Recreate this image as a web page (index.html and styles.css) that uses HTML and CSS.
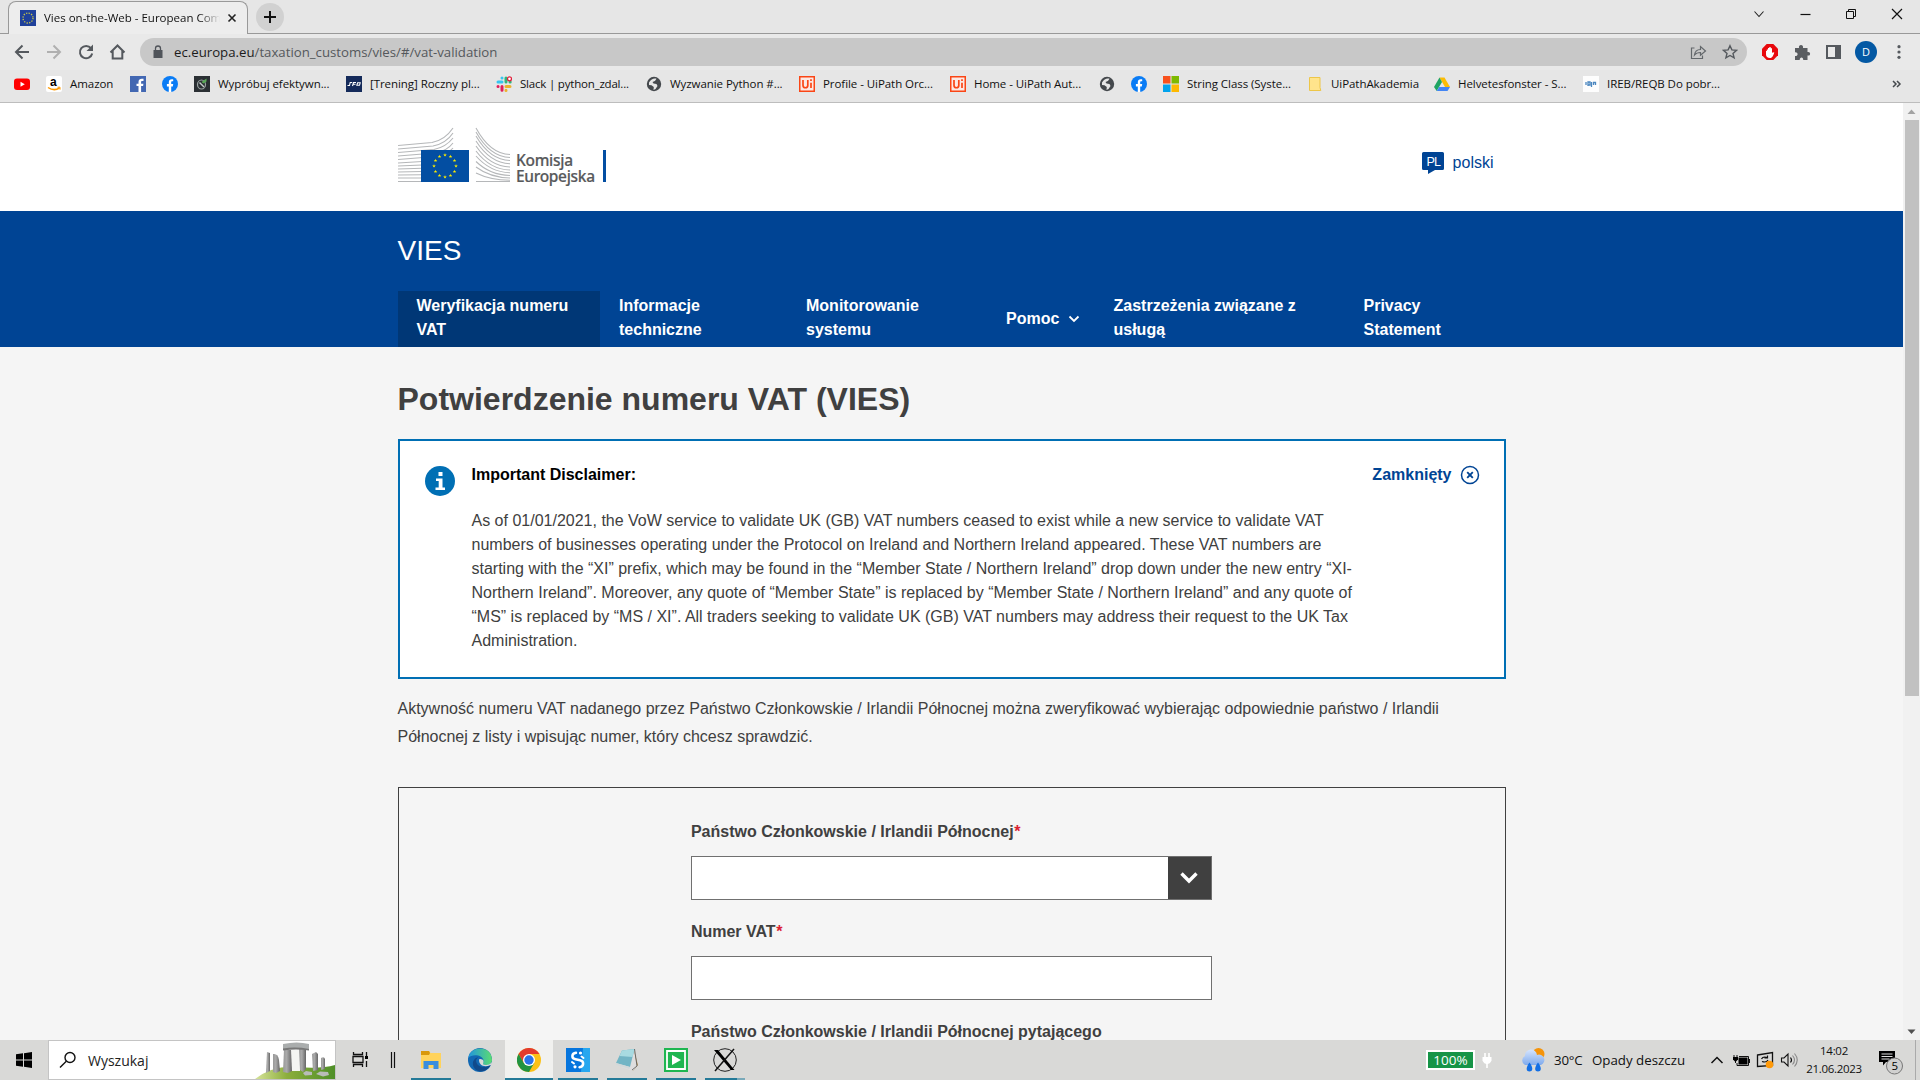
FILE: index.html
```html
<!DOCTYPE html>
<html lang="pl">
<head>
<meta charset="utf-8">
<title>Vies on-the-Web - European Commission</title>
<link rel="stylesheet" href="styles.css">
</head>
<body>
<svg width="0" height="0" class="defs">
  <defs>
    <symbol id="fb" viewBox="0 0 16 16"><circle cx="8" cy="8" r="8" fill="#0a7cf5"/><path d="M6.800 16V10.400H4.900V8h1.900V6.400c0-2 1.100-3.100 2.900-3.100.8 0 1.500.1 1.500.1v1.900h-.9c-.9 0-1.100.6-1.100 1.100V8h2l-.4 2.400H9.200V16z" fill="#fff"/></symbol>
    <symbol id="globe" viewBox="0 0 16 16"><circle cx="8" cy="8" r="7.200" fill="#45494d"/><path d="M3 6.500C5 3 8 2 10.500 2.800L9 5 6.500 6l1 1.500 3 .5 1 2-2 3-2 1 .3-3L5.500 9.300 3 9z" fill="#e6e6e6"/><path d="M8.500 5.500 12 3.500 14 7l-2 1-2.500-1z" fill="#45494d"/></symbol>
    <symbol id="uipath" viewBox="0 0 16 16"><path d="M0 0h16v16H0z" fill="#fa4616"/><path d="M1.500 1.500h13v13h-13z" fill="#fce9e4"/><path d="M4 4v5.200c0 3.400 4.800 3.400 4.800 0V4M12 6.700V12M12 3.300v1.800" fill="none" stroke="#fa4616" stroke-width="1.700"/></symbol>
    <symbol id="star" viewBox="-1 -1 2 2"><path d="M0-1 .225-.31H.95L.363.118.588.809 0 .382-.588.809-.363.118-.95-.31H-.225z" fill="#ffed00"/></symbol>
  </defs>
</svg>

<header class="browser">
  <div class="tabs">
    <div class="tab">
      <svg class="i16" viewBox="0 0 16 16"><path d="M0 0h16v16H0z" fill="#1f419b"/><circle cx="8" cy="8" r="5" fill="none" stroke="#c9c648" stroke-width="1.300" stroke-dasharray="1.300 1.318"/></svg>
      <span class="tab-title">Vies on-the-Web - European Com</span>
      <svg class="tab-close" viewBox="0 0 10 10"><path d="M1.500 1.500l7 7M8.500 1.500l-7 7" stroke="#222" stroke-width="1.600"/></svg>
    </div>
    <div class="newtab"><svg width="14" height="14"><path d="M7 1v12M1 7h12" stroke="#111" stroke-width="2"/></svg></div>
    <div class="winbtns">
      <svg width="48" height="16"><path d="M20.500 5.500 25 10.500 29.500 5.500" fill="none" stroke="#222" stroke-width="1.100"/></svg>
      <svg width="46" height="16"><path d="M18.500 8.500h10" stroke="#111" stroke-width="1.200"/></svg>
      <svg width="46" height="16"><path d="M18.500 5.500h7v7h-7zM20.500 5.500v-2h7v7h-2" fill="none" stroke="#111"/></svg>
      <svg width="46" height="16"><path d="M18 3l10 10M28 3 18 13" stroke="#111" stroke-width="1.200"/></svg>
    </div>
  </div>

  <div class="toolbar">
    <svg class="nav-ico" viewBox="0 0 32 20"><path d="M29 10H16M22.500 3.500 16 10l6.500 6.500" fill="none" stroke="#55595e" stroke-width="2"/></svg>
    <svg class="nav-ico" viewBox="0 0 32 20"><path d="M15 10h13M21.500 3.500 28 10l-6.500 6.500" fill="none" stroke="#b0b0b0" stroke-width="2"/></svg>
    <svg class="nav-ico" viewBox="0 0 32 20"><path d="M27 6.200A6.200 6.200 0 1 0 28.200 11.500" fill="none" stroke="#55595e" stroke-width="2"/><path d="M29 2.500V9h-6.500z" fill="#55595e"/></svg>
    <svg class="nav-ico" viewBox="0 0 32 20"><path d="M14.500 10.500 21.500 3.500l7 7M16.700 9v7.500h9.600V9" fill="none" stroke="#55595e" stroke-width="2"/></svg>
    <div class="omnibox">
      <svg width="12" height="14" viewBox="0 0 12 14"><path d="M1.500 5h9v8h-9z" fill="#50545a"/><path d="M3.500 6V3.500a2.500 2.500 0 0 1 5 0V6" fill="none" stroke="#50545a" stroke-width="1.300"/></svg>
      <span class="url"><b>ec.europa.eu</b>/taxation_customs/vies/#/vat-validation</span>
      <svg class="share" width="17" height="16" viewBox="0 0 17 16"><path d="M4.500 4H1.500v10.500h11v-3M4.500 11c.5-4 2.500-5.500 6-5.500V2.500l5 4.500-5 4.200V8.500c-3 0-4.600.7-6 2.500z" fill="none" stroke="#63676b" stroke-width="1.200"/></svg>
      <svg width="16" height="16" viewBox="0 0 16 16"><path d="M8 1.700l1.900 4.200 4.600.4L11 9.400l1.100 4.500L8 11.500l-4.100 2.400L5 9.400 1.500 6.300l4.600-.4z" fill="none" stroke="#55595e" stroke-width="1.400"/></svg>
    </div>
    <div class="ext">
      <svg width="32" height="24" viewBox="0 0 32 24"><path d="M12.700 4h6.600L24 8.700v6.600L19.300 20h-6.600L8 15.300V8.700z" fill="#e8090d"/><path d="M12 11v3.500c0 2 1.500 3.500 4 3.500 2 0 3-1.500 4.300-5.500l-1.600-.2-.7 1V8.200h-1.300V7h-1.400v1H14v1.500h-1.200V11z" fill="#fff"/></svg>
      <svg width="32" height="24" viewBox="0 0 32 24"><path d="M9 8h4c-1-4 5-4 4 0h4.500v4c3.500-1 3.500 4.500 0 3.500V20h-4.300c.5-3.500-3.800-3.500-3.500 0H9v-4c3.500.3 3.500-4 0-3.800z" fill="#5a5d61"/></svg>
      <svg width="32" height="24" viewBox="0 0 32 24"><path d="M9 6h13v12H9z" fill="none" stroke="#55595e" stroke-width="2"/><path d="M17 6h5v12h-5z" fill="#55595e"/></svg>
      <span class="avatar">D</span>
      <svg width="32" height="24" viewBox="0 0 32 24"><g fill="#55595e"><circle cx="16" cy="6.700" r="1.600"/><circle cx="16" cy="12" r="1.600"/><circle cx="16" cy="17.300" r="1.600"/></g></svg>
    </div>
  </div>

  <nav class="bookmarks">
    <a class="bm w32"><svg class="i16" viewBox="0 0 16 16"><rect y="2.500" width="16" height="11.500" rx="3" fill="#f00"/><path d="M6.500 5.700v5L10.800 8.200z" fill="#fff"/></svg></a>
    <a class="bm w84"><svg class="i16" viewBox="0 0 16 16"><rect width="16" height="16" rx="2" fill="#fff"/><text x="4" y="9.500" font-family="Liberation Sans" font-weight="700" font-size="12">a</text><path d="M2 11.500q6 4 11.500.5" fill="none" stroke="#f90" stroke-width="1.500"/><path d="M11.500 11.200h2.500v2.500" fill="none" stroke="#f90"/></svg><span>Amazon</span></a>
    <a class="bm w32"><svg class="i16" viewBox="0 0 16 16"><path d="M0 0h16v16H0z" fill="#4267b2"/><path d="M8.500 16v-6h-2V7.700h2V6c0-2.300 1.500-3.300 3.300-3.300h1.700v2.200h-1.200c-1 0-1.200.5-1.200 1.200v1.600h2.300l-.3 2.300h-2v6z" fill="#fff"/></svg></a>
    <a class="bm w32"><svg class="i16"><use href="#fb"/></svg></a>
    <a class="bm w152"><svg class="i16" viewBox="0 0 16 16"><path d="M0 0h16v16H0z" fill="#2a2f33"/><ellipse cx="7.500" cy="8.500" rx="4" ry="4.500" fill="none" stroke="#9aa3a2" stroke-width="1.200"/><path d="M5.500 6.500 10 11" stroke="#c5cccb" stroke-width="1.400"/><path d="M7.500 6l5-3.500v3l-3 2z" fill="#59a957"/></svg><span>Wypróbuj efektywn...</span></a>
    <a class="bm w150"><svg class="i16" viewBox="0 0 16 16"><path d="M0 0h16v16H0z" fill="#142a5a"/><path d="M1.500 9.500h2l.7-3h2M6.500 10l1-3.500h2.500M7.500 8.300h2M10.800 9.300l.8-2.500h2.600l-.7 2.500z" fill="none" stroke="#fff" stroke-width="1.100"/></svg><span>[Trening] Roczny pl...</span></a>
    <a class="bm w150"><svg class="i16" viewBox="0 0 16 16"><g fill="none" stroke-width="3" stroke-linecap="round"><path d="M2 6h4M6 2v.1" stroke="#36c5f0"/><path d="M10 2v4M14.200 6H14" stroke="#2eb67d"/><path d="M10 10.500h4M10 14.300v.1" stroke="#ecb22e"/><path d="M6 10.500v3.800M2 10.500h.1" stroke="#e01e5a"/></g><circle cx="13.500" cy="2.800" r="2" fill="#fff" stroke="#e0203c" stroke-width="1.300"/></svg><span class="tight">Slack | python_zdal...</span></a>
    <a class="bm w153"><svg class="i16"><use href="#globe"/></svg><span>Wyzwanie Python #...</span></a>
    <a class="bm w151"><svg class="i16"><use href="#uipath"/></svg><span>Profile - UiPath Orc...</span></a>
    <a class="bm w149"><svg class="i16"><use href="#uipath"/></svg><span>Home - UiPath Aut...</span></a>
    <a class="bm w32"><svg class="i16"><use href="#globe"/></svg></a>
    <a class="bm w32"><svg class="i16"><use href="#fb"/></svg></a>
    <a class="bm w144"><svg class="i16" viewBox="0 0 16 16"><path d="M0 0h7.500v7.500H0z" fill="#f8511d"/><path d="M8.500 0H16v7.500H8.500z" fill="#7eb900"/><path d="M0 8.500h7.500V16H0z" fill="#01a3ed"/><path d="M8.500 8.500H16V16H8.500z" fill="#fdb901"/></svg><span>String Class (Syste...</span></a>
    <a class="bm w127"><svg class="i16" viewBox="0 0 16 16"><path d="M2.500 1.500h10.500v10l.8 3H2.500z" fill="#ffe48c" stroke="#edc649"/></svg><span>UiPathAkademia</span></a>
    <a class="bm w149"><svg class="i16" viewBox="0 0 16 16"><path d="M5.500 1.500h5L16 11h-5z" fill="#fbbc04"/><path d="M5.500 1.500 8 6 2.700 15 0 11z" fill="#1fa463"/><path d="M5.200 11H16l-2.500 4H2.700z" fill="#4285f4"/></svg><span>Helvetesfonster - S...</span></a>
    <a class="bm w149"><svg class="i16" viewBox="0 0 16 16"><path d="M0 0h16v16H0z" fill="#fdfdfd"/><path d="M3 9V6M5 10V6h2v3H5M8.500 6v5M10.500 9V6.500h2V9" fill="none" stroke="#4b87c0" stroke-width="1.300"/></svg><span>IREB/REQB Do pobr...</span></a>
    <svg class="more" width="10" height="8" viewBox="0 0 10 8"><path d="M1 1l3 3-3 3M5 1l3 3-3 3" fill="none" stroke="#45494d" stroke-width="1.500"/></svg>
  </nav>
</header>

<main class="viewport">
  <div class="page">
    <div class="site-header"><div class="wrap site-row">
      <svg class="logo" width="210" height="66" viewBox="0 0 210 66">
        <g fill="none" stroke="#b5b7b9" stroke-width="1.100">
          <path d="M0 20.500 34 17.500Q47 15 55 3"/><path d="M0 24 35 21Q48 18.500 55 8"/><path d="M0 27.500 36 24.500Q48 22 55 13"/><path d="M0 31 37 28Q49 26 55 18"/><path d="M0 34.500 38 31.500Q50 29 55 23"/><path d="M0 38l24-1.500M0 41l24-1M0 44l24-.8M0 47l24-.5M0 50l24-.3M0 53h24M0 56.500h71"/>
          <path d="M78 3Q92 29 112 29.500"/><path d="M78 7Q92 32 112 32.500"/><path d="M78 11Q92 35 112 35.500"/><path d="M78 16Q92 38 112 38.700"/><path d="M78 21Q92 41.500 112 42"/><path d="M78 26Q92 44.500 112 45"/><path d="M78 31Q92 47 112 47.800"/><path d="M78 36.500Q92 50 112 50.500"/><path d="M78 42Q92 52.500 112 53"/><path d="M78 48Q92 55 112 55.300"/><path d="M78 56.500h34"/>
        </g>
        <path d="M23 25h48v32H23z" fill="#034ea2"/>
        <use href="#star" x="45" y="28" width="4" height="4"/><use href="#star" x="50.500" y="29.500" width="4" height="4"/><use href="#star" x="54.500" y="33.500" width="4" height="4"/><use href="#star" x="56" y="39" width="4" height="4"/><use href="#star" x="54.500" y="44.500" width="4" height="4"/><use href="#star" x="50.500" y="48.500" width="4" height="4"/><use href="#star" x="45" y="50" width="4" height="4"/><use href="#star" x="39.500" y="48.500" width="4" height="4"/><use href="#star" x="35.500" y="44.500" width="4" height="4"/><use href="#star" x="34" y="39" width="4" height="4"/><use href="#star" x="35.500" y="33.500" width="4" height="4"/><use href="#star" x="39.500" y="29.500" width="4" height="4"/>
        <g class="logo-text"><text x="118" y="40.500" textLength="57">Komisja</text><text x="118" y="57" textLength="79">Europejska</text></g>
        <path d="M205 25h3v32h-3z" fill="#034ea2"/>
      </svg>
      <a class="lang"><svg width="22" height="22" viewBox="0 0 22 22"><path d="M1.500 0h19A1.500 1.500 0 0 1 22 1.500v15a1.500 1.500 0 0 1-1.500 1.500H13l-7 4v-4H1.500A1.500 1.500 0 0 1 0 16.500v-15A1.500 1.500 0 0 1 1.500 0z" fill="#004494"/><text x="4.500" y="14" font-family="Liberation Sans" font-size="12.500" fill="#fff" textLength="14.500">PL</text></svg><span>polski</span></a>
    </div></div>

    <div class="banner"><div class="wrap">
      <div class="site-name">VIES</div>
      <nav class="menu">
        <a class="item active n1">Weryfikacja numeru<br>VAT</a>
        <a class="item n2">Informacje<br>techniczne</a>
        <a class="item n3">Monitorowanie<br>systemu</a>
        <a class="item n4">Pomoc<svg width="12" height="8" viewBox="0 0 12 8"><path d="M1.500 1.500 6 6l4.500-4.500" fill="none" stroke="#fff" stroke-width="1.800"/></svg></a>
        <a class="item n5">Zastrzeżenia związane z<br>usługą</a>
        <a class="item n6">Privacy<br>Statement</a>
      </nav>
    </div></div>

    <div class="wrap content">
      <h1>Potwierdzenie numeru VAT (VIES)</h1>
      <section class="notice">
        <svg class="info" width="30" height="30" viewBox="0 0 30 30"><circle cx="15" cy="15" r="15" fill="#006fb4"/><path d="M13.500 6h4v4h-4zM11 12.500h6.500v9H20V24h-9.500v-2.500h3.200V15H11z" fill="#fff"/></svg>
        <div class="notice-body">
          <div class="notice-title">Important Disclaimer:</div>
          <p>As of 01/01/2021, the VoW service to validate UK (GB) VAT numbers ceased to exist while a new service to validate VAT<br>numbers of businesses operating under the Protocol on Ireland and Northern Ireland appeared. These VAT numbers are<br>starting with the “XI” prefix, which may be found in the “Member State / Northern Ireland” drop down under the new entry “XI-<br>Northern Ireland”. Moreover, any quote of “Member State” is replaced by “Member State / Northern Ireland” and any quote of<br>“MS” is replaced by “MS / XI”. All traders seeking to validate UK (GB) VAT numbers may address their request to the UK Tax<br>Administration.</p>
        </div>
        <a class="close">Zamknięty<svg width="20" height="20" viewBox="0 0 20 20"><circle cx="10" cy="10" r="8.500" fill="none" stroke="#004494" stroke-width="1.500"/><path d="M7.200 7.200l5.600 5.600M12.800 7.200l-5.600 5.600" stroke="#004494" stroke-width="1.900"/></svg></a>
      </section>
      <p class="intro">Aktywność numeru VAT nadanego przez Państwo Członkowskie / Irlandii Północnej można zweryfikować wybierając odpowiednie państwo / Irlandii<br>Północnej z listy i wpisując numer, który chcesz sprawdzić.</p>
      <form class="form">
        <label>Państwo Członkowskie / Irlandii Północnej<i>*</i></label>
        <div class="field select"><span class="arrow"><svg width="20" height="14" viewBox="0 0 20 14"><path d="M2.500 2.500 10 10l7.500-7.500" fill="none" stroke="#fff" stroke-width="3.400"/></svg></span></div>
        <label>Numer VAT<i>*</i></label>
        <div class="field"></div>
        <label>Państwo Członkowskie / Irlandii Północnej pytającego</label>
      </form>
    </div>
  </div>
  <div class="scrollbar">
    <svg width="17" height="17"><path d="M4.500 11h8L8.500 6.500z" fill="#a3a3a3"/></svg>
    <div class="thumb"></div>
    <svg class="down" width="17" height="17"><path d="M4.500 6.500h8L8.500 11z" fill="#505050"/></svg>
  </div>
</main>

<footer class="taskbar">
  <svg width="48" height="40"><path d="M16 14.300l7-1v6.200h-7zM24 13.200l8-1.200v7.500h-8zM16 20.500h7v6.200l-7-1zM24 20.500h8V28l-8-1.200z" fill="#000"/></svg>
  <div class="search">
    <svg width="18" height="18" viewBox="0 0 18 18"><circle cx="11" cy="6.500" r="5" fill="none" stroke="#111" stroke-width="1.400"/><path d="M7.300 10.200 1 16.500" stroke="#111" stroke-width="1.400"/></svg>
    <span>Wyszukaj</span>
    <svg class="scene" width="80" height="38" viewBox="0 0 80 38">
      <defs><linearGradient id="st" x2="1"><stop stop-color="#999"/><stop offset=".4" stop-color="#aaa"/><stop offset="1" stop-color="#666"/></linearGradient><linearGradient id="gr" x2="1"><stop stop-color="#d6e39a"/><stop offset=".4" stop-color="#8cae3c"/><stop offset="1" stop-color="#4f8f28"/></linearGradient></defs>
      <path d="M0 38Q18 24 42 26T80 24v14z" fill="url(#gr)"/>
      <path d="M35 9h10v21H35z" fill="#f4f5f2"/>
      <g fill="url(#st)"><path d="M12 11l3 1 0 18-4 2z"/><path d="M18 13q5-1 6 6l1 11-4 2-3-1z"/><path d="M29 8l7 1 1 21-4 2-5-1z"/><path d="M44 8h7v20l-3 3-3-2z"/><path d="M57 13l4-2 2 2v16l-5 1z"/><path d="M66 17q3-2 4 1l0 10-4 1z"/></g>
      <path d="M28 3q14-3 26 0v6q-14-2-26 0z" fill="#aaadad"/><path d="M28 7.500q13-2 26 .5v1.500q-13-2-26 0z" fill="#777"/>
      <path d="M48 32l3-2 6 1v3l-7 .5zM61 33l4-2.500 8 .5 1 3-6 1.500z" fill="#b9bcb9"/>
    </svg>
  </div>
  <svg width="76" height="40"><path d="M17.500 12v2.500h9V12M17.500 27v-2.500h9V27M17 16.500h10v6H17z" fill="none" stroke="#111" stroke-width="1.300"/><path d="M30.500 12v4M30.500 21v6" stroke="#111" stroke-width="1.300"/><path d="M29 16h3v3h-3z"/><path d="M55.500 12v16M58.500 12v16" stroke="#111" stroke-width="1.200"/></svg>
  <div class="apps">
    <div class="app on"><svg width="24" height="24" viewBox="0 0 24 24"><path d="M2 3h8l1.500 2H22v15H2z" fill="#ffd35c"/><path d="M2 3h8l1 2-1 2H2z" fill="#d9980b"/><path d="M4.500 13h15v8h-5v-4h-5v4h-5z" fill="#3a8dde"/></svg></div>
    <div class="app"><svg width="24" height="24" viewBox="0 0 24 24"><defs><linearGradient id="ed" x2="1"><stop stop-color="#2196dd"/><stop offset="1" stop-color="#5bdc72"/></linearGradient></defs><circle cx="12" cy="12" r="12" fill="#1268b3"/><path d="M.3 10C2-3 24-3 24 12c0 4-4.500 6-8.500 4.500-1.500-.6-.2-1.500 0-3.500C16 7 4 5 .3 10z" fill="url(#ed)"/><path d="M8 12c0 7 8 9 14.500 5C19 25 7 26 5 17c-.8-4 2-7 5-8z" fill="#114a8b"/><path d="M11 12c0 5 5 8 11.500 5l1 1.500L24 14c-2 3-6 3.500-8.500 2.500-1-.5 0-1.500 0-3.500 0-1.500-4.500-3-4.500-1z" fill="#dadad8"/></svg></div>
    <div class="app on current"><svg width="24" height="24" viewBox="0 0 24 24"><circle cx="12" cy="12" r="12" fill="#fbc116"/><path d="M1.600 6A12 12 0 0 1 22.400 6H12l-5.200 9z" fill="#e33b2e"/><path d="M1.600 6A12 12 0 0 0 12 24l5.200-9H6.800z" fill="#229342"/><circle cx="12" cy="12" r="6" fill="#fff"/><circle cx="12" cy="12" r="4.700" fill="#2a73e8"/></svg></div>
    <div class="app on"><svg width="24" height="24" viewBox="0 0 24 24"><path d="M0 0h24v24H0z" fill="#0675dd"/><path d="M17 0h7v24h-9z" fill="#27a7ef"/><path d="M10 4.800C5.500 5.300 5 10.500 9.500 11.300L14 12.300C18.500 13.300 18 18.700 13.500 19.200" fill="none" stroke="#fff" stroke-width="2.500" stroke-linecap="round"/><circle cx="14.500" cy="5" r="1.600" fill="#fff"/><circle cx="9" cy="18.800" r="1.600" fill="#fff"/><path d="M15.500 8.500l2 1.500M6 14l2 1.500" stroke="#fff" stroke-width="2" stroke-linecap="round"/></svg></div>
    <div class="app on"><svg width="24" height="24" viewBox="0 0 24 24"><path d="M19 2l4 15-5 6-3-2z" fill="#b79660"/><path d="M6 19l12 4 4-5L19 2z" fill="#dedede"/><path d="M7 2.500 19.500 1 15 19 1 15z" fill="#72b5c5"/><path d="M7 2.500 19.500 1 17.500 9 4.500 8z" fill="#a8dbe1"/><path d="M1 15l14 4-.5 2L1 17z" fill="#d1d8d9"/><path d="M19.500 1 22 18l-5 4" fill="none" stroke="#555" stroke-width=".8"/></svg></div>
    <div class="app on"><svg width="24" height="24" viewBox="0 0 24 24"><path d="M0 0h24v24H0z" fill="#1fb651"/><path d="M3 3h18v18H3z" fill="none" stroke="#fff" stroke-width="1.800"/><path d="M8 7l9 5-9 5z" fill="#fff"/></svg></div>
    <div class="app on multi"><svg width="24" height="24" viewBox="0 0 24 24"><circle cx="12" cy="12" r="11.300" fill="none" stroke="#222"/><path d="M1 2h4L21.500 22H18z"/><path d="M21 1 2 23" stroke="#111" stroke-width="1.500"/></svg></div>
  </div>
  <div class="battery">100%</div>
  <svg class="plug" width="14" height="20" viewBox="0 0 14 20"><path d="M5 3v5M9 3v5M7 12v6" stroke="#fff" stroke-width="1.600"/><path d="M2.500 7h9v3.500Q10 14 7 14T2.500 10.500z" fill="#fff"/></svg>
  <div class="weather">
    <svg width="26" height="26" viewBox="0 0 26 26"><defs><linearGradient id="cl" x2="0" y2="1"><stop stop-color="#d5e5ff"/><stop offset="1" stop-color="#7faaec"/></linearGradient></defs><circle cx="18.500" cy="7" r="6" fill="#f5940b"/><path d="M5 18a5 5 0 0 1 0-9 6 6 0 0 1 12-1 5 5 0 0 1 4 10z" fill="url(#cl)"/><path d="M9.500 15.500c4.500 6 3 9 0 9s-4.500-3 0-9zM18 15.500c4.500 6 3 9 0 9s-4.500-3 0-9z" fill="#136fe4"/></svg>
    <span class="temp">30°C</span><span class="cond">Opady deszczu</span>
  </div>
  <div class="tray">
    <svg width="24" height="24" viewBox="0 0 24 24"><path d="M6.500 15 12 9.500l5.500 5.500" fill="none" stroke="#111" stroke-width="1.500"/></svg>
    <svg width="24" height="24" viewBox="0 0 24 24"><path d="M9.500 9.500h9v7h-9z" fill="#000"/><path d="M10 8.500h9.500v9H8V15M20.500 11v4M5 7v3M8 7v3M6.500 12v3" fill="none" stroke="#111"/><path d="M4 9h5v2.500L6.500 14 4 11.500z"/></svg>
    <svg width="24" height="24" viewBox="0 0 24 24"><path d="M4.500 7 19.500 4.500v13L4.500 18.500z" fill="none" stroke="#111" stroke-width="1.300"/><path d="M8.500 11Q10 8 14.500 9.500M14.500 7.500v2.500h-3M15 12q-1.500 3-6 1.500" fill="none" stroke="#111" stroke-width="1.200"/><circle cx="16.500" cy="16.500" r="3.800" fill="#ff9a0a"/></svg>
    <svg width="24" height="24" viewBox="0 0 24 24"><path d="M4.500 10h2.500L11 6v12L7 14H4.500z" fill="none" stroke="#111" stroke-width="1.100"/><path d="M13.500 9.500q2 2.500 0 5" fill="none" stroke="#111" stroke-width="1.200"/><path d="M15.500 7.500q4 4.500 0 9M17.500 5.500q5.500 6.500 0 13" fill="none" stroke="#8a8a8a" stroke-width="1.100"/></svg>
  </div>
  <div class="clock"><span>14:02</span><span>21.06.2023</span></div>
  <svg class="notif" width="28" height="30" viewBox="0 0 28 30"><path d="M2 6h16v11H9l-3 3.500V17H2z"/><path d="M4.500 9h11M4.500 11.500h11M4.500 14h8" stroke="#ddd"/><circle cx="17.500" cy="21" r="8" fill="#d0d0cf" stroke="#777"/><text x="14.500" y="25" font-family="Open Sans" font-size="11.500">5</text></svg>
  <div class="peek"></div>
</footer>
</body>
</html>
```
FILE: styles.css
```css
* { box-sizing: border-box; }
body { margin: 0; width: 1920px; height: 1080px; overflow: hidden; display: flex; flex-direction: column; font-family: "Liberation Sans", Arial, sans-serif; font-size: 16px; line-height: 24px; color: #404040; }
svg { display: block; flex: none; }
.defs { position: absolute; }
.i16 { width: 16px; height: 16px; }

/* browser chrome */
.browser { height: 103px; flex: none; background: #e6e6e6; border-bottom: 1px solid #bdbdbd; font-family: "Open Sans", "Noto Sans", sans-serif; color: #111; }
.tabs { height: 34px; display: flex; align-items: flex-end; border-bottom: 1px solid #999; padding-left: 8px; }
.tab { width: 240px; height: 33px; margin-bottom: -1px; border: 1px solid #999; border-bottom: 0; border-radius: 8px 8px 0 0; background: #ededed; display: flex; align-items: center; padding: 0 10px 1px 11px; }
.tab-title { width: 176px; margin-left: 8px; font-size: 11.500px; line-height: 16px; white-space: nowrap; overflow: hidden; -webkit-mask-image: linear-gradient(90deg, #000 88%, transparent); mask-image: linear-gradient(90deg, #000 88%, transparent); }
.tab-close { width: 10px; height: 10px; margin-left: 7px; }
.newtab { width: 28px; height: 28px; margin: 0 0 2px 8px; border-radius: 50%; background: #d1d1d1; display: flex; align-items: center; justify-content: center; }
.winbtns { display: flex; margin: 0 0 11px auto; }
.toolbar { height: 36px; display: flex; align-items: center; background: #e9e9e9; }
.nav-ico { width: 32px; height: 20px; }
.omnibox { width: 1607px; height: 28px; margin-left: 12px; border-radius: 14px; background: #c8c8c8; display: flex; align-items: center; padding: 0 9px 0 12px; }
.url { margin-left: 10px; font-size: 13.230px; color: #55585c; line-height: 20px; }
.url b { font-weight: 400; color: #1c1c1c; }
.share { margin-left: auto; margin-right: 15px; }
.ext { display: flex; align-items: center; padding-left: 7px; }
.avatar { width: 22px; height: 22px; margin: 0 6px 0 5px; border-radius: 50%; background: #0459a4; color: #fff; font-size: 11px; line-height: 22px; text-align: center; }
.bookmarks { height: 32px; display: flex; align-items: center; padding-left: 14px; margin-top: -2px; }
.bm { display: flex; align-items: center; gap: 8px; flex: none; font-size: 11.500px; line-height: 16px; white-space: nowrap; letter-spacing: -.06px; }
.tight { letter-spacing: -.2px; }
.w32 { width: 32px; }
.w84 { width: 84px; }
.w127 { width: 127px; }
.w144 { width: 144px; }
.w149 { width: 149px; }
.w150 { width: 150px; }
.w151 { width: 151px; }
.w152 { width: 152px; }
.w153 { width: 153px; }
.more { margin: 0 18px 0 auto; }

/* page */
.viewport { height: 937px; flex: none; display: flex; overflow: hidden; }
.page { width: 1903px; background: #f5f5f5; overflow: hidden; }
.wrap { width: 1108px; margin: 0 auto; }
.site-header { height: 108px; background: #fff; }
.site-row { display: flex; justify-content: space-between; align-items: flex-start; padding-top: 22px; }
.logo-text { font-family: "Noto Sans", sans-serif; font-size: 15.500px; font-weight: 500; fill: #58595b; stroke: #58595b; stroke-width: .2px; }
.lang { display: flex; gap: 9px; height: 24px; margin: 26px 12px 0 0; color: #004494; line-height: 23px; }
.lang svg { margin-top: 1px; }
.banner { height: 136px; background: #004494; color: #fff; }
.site-name { height: 80px; padding-top: 21.500px; font-size: 28px; line-height: 36px; }
.menu { display: flex; height: 56px; font-weight: 700; }
.item { padding: 3px 0 0 19px; white-space: nowrap; }
.item.active { background: #003776; }
.n1 { width: 202.500px; }
.n2 { width: 187px; }
.n3 { width: 200px; }
.n4.item { width: 107.500px; display: flex; align-items: center; padding-top: 0; }
.n4 svg { margin-left: 9px; }
.n5 { width: 250px; }
h1 { margin: 0; padding-top: 33px; height: 92px; font-size: 32px; line-height: 38px; }
.notice { height: 240px; background: #fff; border: 2px solid #006fb4; display: flex; padding: 22px 24px 0 25px; }
.info { margin-top: 3px; }
.notice-body { width: 900px; margin-left: 17px; white-space: nowrap; }
.notice-title { font-weight: 700; color: #000; }
.notice-body p { margin: 22px 0 0; }
.close { margin-left: auto; display: flex; gap: 8px; align-items: center; height: 24px; font-weight: 700; color: #004494; }
.intro { margin: 16px 0 0; line-height: 28px; height: 92px; white-space: nowrap; }
.form { height: 400px; border: 1px solid #404040; padding: 32px 0 0 292.400px; }
label { display: block; height: 36px; font-weight: 700; }
label i { color: #da2131; font-style: normal; margin-left: .5px; }
.field { width: 521px; height: 44px; background: #fff; border: 1px solid #707070; margin-bottom: 20px; }
.select { display: flex; justify-content: flex-end; }
.arrow { width: 43px; background: #404040; display: flex; align-items: center; justify-content: center; }
.scrollbar { width: 17px; background: #f1f1f1; display: flex; flex-direction: column; }
.thumb { height: 576px; background: #c1c1c1; margin: 0 1px 0 2px; }
.down { margin-top: auto; }

/* taskbar */
.taskbar { height: 40px; flex: none; display: flex; align-items: center; background: #d9d9d7; font-family: "Open Sans", "Noto Sans", sans-serif; color: #111; }
.search { width: 288px; height: 40px; background: #fff; border: 1px solid #c4c4c4; display: flex; align-items: center; padding-left: 10px; }
.search span { margin-left: 11px; padding-top: 1px; font-size: 14px; color: #222; }
.scene { margin-left: auto; }
.apps { display: flex; gap: 1px; margin-left: -5px; }
.app { width: 48px; height: 40px; display: flex; flex-wrap: wrap; justify-content: center; align-content: flex-start; padding-top: 8px; }
.app.on::after { content: ""; width: 40px; height: 2px; margin-top: 6px; background: #247a98; }
.app.current { background: #f1f1ef; }
.app.current::after { width: 48px; }
.app.multi::after { background: linear-gradient(90deg, #247a98 80%, #79a9b9 80%); }
.battery { margin-left: 677px; width: 49px; height: 20px; border: 2px solid #fff; background: #169447; color: #fff; font-size: 13.500px; line-height: 16px; text-align: center; }
.plug { margin-left: 5px; }
.weather { margin-left: 28px; display: flex; align-items: center; width: 183px; white-space: nowrap; font-size: 13.300px; }
.weather svg { margin-left: -2px; }
.temp { margin-left: 8px; width: 38px; letter-spacing: -.2px; }
.tray { display: flex; }
.clock { width: 66px; display: flex; flex-direction: column; align-items: center; font-size: 11.500px; line-height: 18px; letter-spacing: -.3px; }
.notif { margin-left: 10px; }
.peek { width: 1px; height: 40px; background: #aaa; margin: 0 4px 0 auto; }
```
